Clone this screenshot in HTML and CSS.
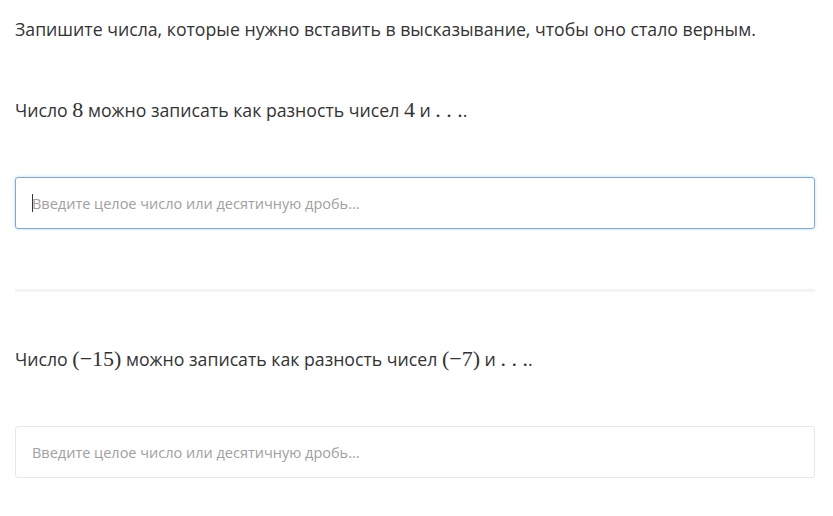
FILE: index.html
```html
<!DOCTYPE html>
<html>
  <head>
    <meta charset="UTF-8">
    <title>Задание</title>
    <link rel="stylesheet" href="styles.css">
  </head>
  <body>
    <div class="task">
      <p class="lead">Запишите числа, которые нужно вставить в высказывание, чтобы оно стало верным.</p>

      <div class="item">
        <p class="question">Число <span class="math">8</span> можно записать как разность чисел <span class="math">4</span> и <span class="math">. . .</span>.</p>
        <div class="field focused"><span class="caret"></span><span class="ph">Введите целое число или десятичную дробь...</span></div>
      </div>

      <hr class="sep">

      <div class="item">
        <p class="question">Число <span class="math">(&minus;15)</span> можно записать как разность чисел <span class="math">(&minus;7)</span> и <span class="math">. . .</span>.</p>
        <div class="field"><span class="ph">Введите целое число или десятичную дробь...</span></div>
      </div>
    </div>
  </body>
</html>
```

FILE: styles.css
```css
/* task page */
body {
  margin: 0;
  background: #fff;
  font-family: "Open Sans", "Noto Sans", sans-serif;
  color: #333;
}
.task {
  width: 800px;
  padding: 0 15px;
}
p {
  margin: 0;
}
.lead {
  font-size: 17.7px;
  line-height: 24px;
  padding-top: 17px;
}
.question {
  font-size: 17.7px;
  line-height: 24px;
  margin-top: 57px;
}
.sep + .item .question {
  margin-top: 55px;
}
.math {
  font-family: "Liberation Serif", "DejaVu Serif", serif;
  font-size: 22px;
  line-height: 20px;
}
.field {
  margin-top: 55px;
  height: 50px;
  border: 1px solid #e6e6e6;
  border-radius: 3px;
  display: flex;
  align-items: center;
  padding: 0 16px;
  font-size: 14.5px;
}
.field.focused {
  border-color: #7fa9d8;
  box-shadow: 0 0 3px rgba(120, 170, 230, 0.5);
}
.caret {
  width: 1px;
  height: 18px;
  background: #333;
  margin-right: -1px;
}
.ph {
  color: #a0a0a0;
}
.sep {
  margin: 60px 0 0;
  border: 0;
  height: 3px;
  background: #f3f4f6;
}
```
